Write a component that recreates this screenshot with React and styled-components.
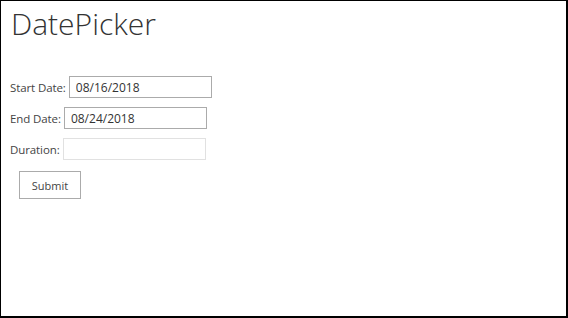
import styled, { createGlobalStyle } from "styled-components"

const GlobalStyle = createGlobalStyle`
    html, body {
        margin: 0;
        padding: 0;
        background: #fff;
    }
    * {
        box-sizing: border-box;
    }
`

const Frame = styled.div`
    width: 568px;
    height: 318px;
    border: 1px solid #000;
    border-right-width: 2px;
    border-bottom-width: 2px;
    padding: 0 0 0 9px;
    font-family: "Open Sans", "Liberation Sans", sans-serif;
    color: #444;
`

const Title = styled.h1`
    margin: 0;
    padding: 5px 0 0 1px;
    font-family: "Open Sans", sans-serif;
    font-weight: 300;
    font-size: 30px;
    line-height: 36px;
    color: #333;
`

const Form = styled.form`
    margin-top: 34px;
    display: flex;
    flex-direction: column;
    gap: 9px;
`

const Row = styled.div`
    display: flex;
    align-items: center;
    gap: 3px;
    height: 22px;
`

const Label = styled.label`
    font-size: 11.5px;
    letter-spacing: -0.1px;
    color: #444;
    white-space: nowrap;
`

const Input = styled.input`
    width: 143px;
    height: 22px;
    padding: 0 6px;
    border: 1px solid ${p => (p.disabled ? "#e1e1e1" : "#ababab")};
    background: #fff;
    font-family: "Open Sans", sans-serif;
    font-size: 12px;
    color: #333;
    outline: none;
`

const Submit = styled.button`
    margin: 2px 0 0 9px;
    width: 62px;
    height: 28px;
    border: 1px solid #ababab;
    background: #fff;
    font-family: "Open Sans", sans-serif;
    font-size: 11px;
    color: #444;
    padding: 0;
`

function App() {
    return (
        <>
            <GlobalStyle />
            <Frame>
                <Title>DatePicker</Title>
                <Form onSubmit={e => e.preventDefault()}>
                    <Row>
                        <Label>Start Date:</Label>
                        <Input defaultValue="08/16/2018" />
                    </Row>
                    <Row>
                        <Label>End Date:</Label>
                        <Input defaultValue="08/24/2018" />
                    </Row>
                    <Row>
                        <Label>Duration:</Label>
                        <Input disabled />
                    </Row>
                    <div>
                        <Submit type="submit">Submit</Submit>
                    </div>
                </Form>
            </Frame>
        </>
    )
}

export default App
